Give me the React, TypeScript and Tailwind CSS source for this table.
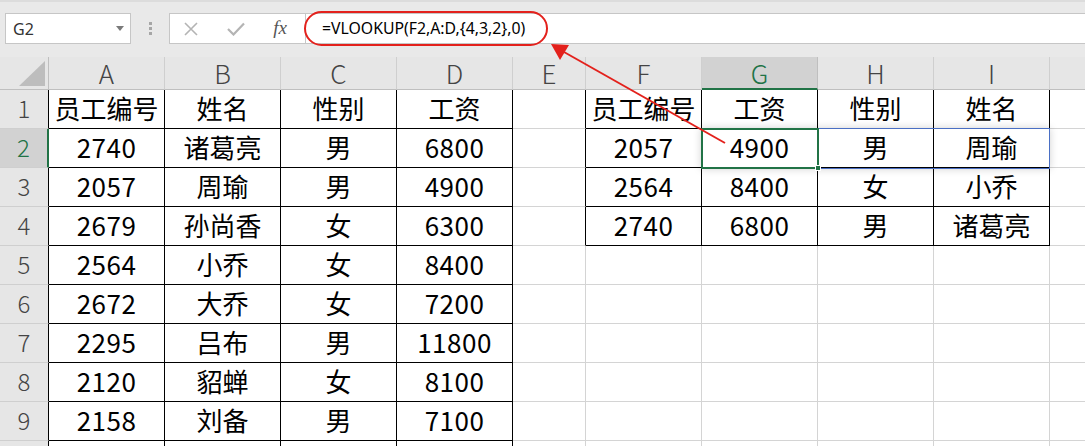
import React from "react";

const COLS = ["A", "B", "C", "D", "E", "F", "G", "H", "I", ""];

const data: Record<number, string[]> = {
  1: ["员工编号", "姓名", "性别", "工资", "", "员工编号", "工资", "性别", "姓名", ""],
  2: ["2740", "诸葛亮", "男", "6800", "", "2057", "4900", "男", "周瑜", ""],
  3: ["2057", "周瑜", "男", "4900", "", "2564", "8400", "女", "小乔", ""],
  4: ["2679", "孙尚香", "女", "6300", "", "2740", "6800", "男", "诸葛亮", ""],
  5: ["2564", "小乔", "女", "8400", "", "", "", "", "", ""],
  6: ["2672", "大乔", "女", "7200", "", "", "", "", "", ""],
  7: ["2295", "吕布", "男", "11800", "", "", "", "", "", ""],
  8: ["2120", "貂蝉", "女", "8100", "", "", "", "", "", ""],
  9: ["2158", "刘备", "男", "7100", "", "", "", "", "", ""],
  10: ["", "", "", "", "", "", "", "", "", ""],
};

function inTable(r: number, c: number) {
  if (r >= 1 && r <= 11 && c >= 0 && c <= 3) return true;
  if (r >= 1 && r <= 4 && c >= 5 && c <= 8) return true;
  return false;
}

function Cell({ r, c, text }: { r: number; c: number; text: string }) {
  const right = inTable(r, c) || inTable(r, c + 1);
  const bottom = inTable(r, c) || inTable(r + 1, c);
  const isNum = /^\d+$/.test(text);
  return (
    <div
      className={
        "flex h-[39px] items-center justify-center border-r border-b pb-[2px] text-[26px] leading-none text-black " +
        (right ? "border-r-black " : "border-r-[#d4d4d4] ") +
        (bottom ? "border-b-black " : "border-b-[#d4d4d4] ") +
        (isNum ? "tracking-[0.5px]" : "")
      }
    >
      {text}
    </div>
  );
}

export default function App() {
  const rows = [1, 2, 3, 4, 5, 6, 7, 8, 9, 10];
  return (
    <div className="relative h-[446px] w-[1085px] overflow-hidden bg-[#e6e6e6] font-['Noto_Sans_CJK_SC',sans-serif]">
      {/* formula bar */}
      <div className="flex h-[57px] items-start border-t-2 border-t-[#dcdcdc] bg-[#e9e9e9] pt-[11px] pl-[5px]">
        <div className="flex h-[31px] w-[126px] items-center justify-between border border-[#c6c6c6] bg-white pr-[6px] pl-[7px]">
          <span className="font-['Noto_Sans',sans-serif] text-[16px] text-[#333]">G2</span>
          <svg width="8" height="5" viewBox="0 0 8 5">
            <path d="M0 0 L8 0 L4 5 Z" fill="#7a7a7a" />
          </svg>
        </div>
        <div className="flex h-[31px] w-[38px] flex-col items-center justify-center gap-[2px]">
          <span className="h-[3px] w-[3px] bg-[#a6a6a6]" />
          <span className="h-[3px] w-[3px] bg-[#a6a6a6]" />
          <span className="h-[3px] w-[3px] bg-[#a6a6a6]" />
        </div>
        <div className="flex h-[31px] w-[137px] items-center border border-[#c6c6c6] bg-white">
          <div className="flex w-[42px] justify-center">
            <svg width="14" height="14" viewBox="0 0 14 14">
              <path d="M1 1 L13 13 M13 1 L1 13" stroke="#b4b4b4" strokeWidth="1.6" />
            </svg>
          </div>
          <div className="flex w-[48px] justify-center">
            <svg width="18" height="14" viewBox="0 0 18 14">
              <path d="M1 7 L6.5 12.5 L17 1.5" stroke="#b4b4b4" strokeWidth="2.2" fill="none" />
            </svg>
          </div>
          <div className="flex w-[40px] justify-center font-['Liberation_Serif',serif] text-[19px] italic text-[#555]">
            fx
          </div>
        </div>
        <div className="flex h-[31px] flex-1 items-center border-y border-[#c6c6c6] bg-white pl-[16px] font-['Noto_Sans',sans-serif] text-[15.8px] text-black">
          =VLOOKUP(F2,A:D,{"{"}4,3,2{"}"},0)
        </div>
      </div>

      {/* sheet grid */}
      <div className="grid grid-cols-[49px_116px_116px_116px_116px_73px_116px_116px_116px_116px_116px] bg-white">
        {/* header row */}
        <div className="relative h-[33px] border-r border-b border-[#bfbfbf] bg-[#e6e6e6]">
          <svg className="absolute right-[3px] bottom-[3px]" width="26" height="25" viewBox="0 0 26 25">
            <path d="M26 0 L26 25 L0 25 Z" fill="#bdbdbd" />
          </svg>
        </div>
        {COLS.map((c, i) => {
          const sel = c === "G";
          return (
            <div
              key={"h" + i}
              className={
                "flex h-[33px] items-center justify-center border-r text-[26px] leading-none font-light " +
                (sel
                  ? "border-b-2 border-r-[#bfbfbf] border-b-[#217346] bg-[#d2d2d2] text-[#217346]"
                  : "border-b border-r-[#cfcfcf] border-b-[#bfbfbf] bg-[#e6e6e6] text-[#444]")
              }
            >
              {c}
            </div>
          );
        })}

        {rows.map((r) => (
          <React.Fragment key={r}>
            <div
              className={
                "flex h-[39px] items-center justify-center border-b border-b-[#cfcfcf] pb-[2px] text-[24px] leading-none font-light " +
                (r === 2
                  ? "border-r-2 border-r-[#217346] bg-[#d2d2d2] text-[#217346]"
                  : "border-r border-r-black bg-[#e6e6e6] text-[#444]")
              }
            >
              {r < 10 ? r : ""}
            </div>
            {data[r].map((t, c) => (
              <Cell key={c} r={r} c={c} text={t} />
            ))}
          </React.Fragment>
        ))}
      </div>

      {/* spill range outline G2:I2 */}
      <div className="pointer-events-none absolute top-[128px] left-[701px] h-[41px] w-[349px] border border-[#4a6fc4] shadow-[0_0_8px_rgba(0,0,0,0.18)]" />
      {/* active cell G2 */}
      <div className="pointer-events-none absolute top-[128px] left-[701px] h-[41px] w-[118px] border-2 border-[#217346]" />
      <div className="pointer-events-none absolute top-[165px] left-[815px] h-[6px] w-[6px] border border-white bg-[#217346]" />

      {/* annotation */}
      <svg className="pointer-events-none absolute top-0 left-0" width="1085" height="446" viewBox="0 0 1085 446">
        <rect x="305" y="12" width="242" height="33" rx="16.5" ry="16.5" fill="none" stroke="#e3211c" strokeWidth="2" />
        <line x1="725" y1="143" x2="564" y2="52" stroke="#e3211c" strokeWidth="2" />
        <polygon points="551,44 569,45 560,60" fill="#e3211c" />
      </svg>
    </div>
  );
}
